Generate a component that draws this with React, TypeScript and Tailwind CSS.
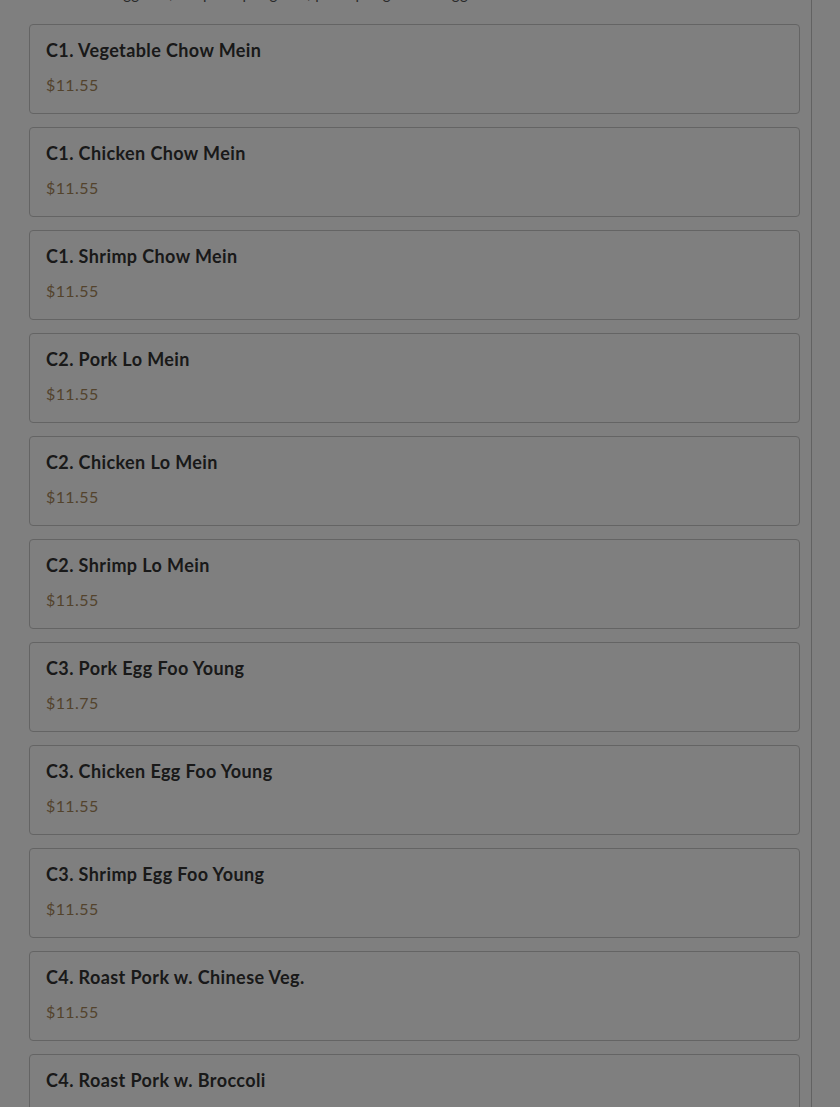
import React from "react";

const items: [string, string][] = [
  ["C1. Vegetable Chow Mein", "$11.55"],
  ["C1. Chicken Chow Mein", "$11.55"],
  ["C1. Shrimp Chow Mein", "$11.55"],
  ["C2. Pork Lo Mein", "$11.55"],
  ["C2. Chicken Lo Mein", "$11.55"],
  ["C2. Shrimp Lo Mein", "$11.55"],
  ["C3. Pork Egg Foo Young", "$11.75"],
  ["C3. Chicken Egg Foo Young", "$11.55"],
  ["C3. Shrimp Egg Foo Young", "$11.55"],
  ["C4. Roast Pork w. Chinese Veg.", "$11.55"],
  ["C4. Roast Pork w. Broccoli", "$11.55"],
];

export default function App() {
  return (
    <div className="relative h-[1107px] overflow-hidden bg-white" style={{ fontFamily: "Lato, 'Open Sans', sans-serif" }}>
      <div className="w-[812px] min-h-[1107px] border-r border-[#c4c4c4] pl-[29px] pr-[11px]">
        <p className="mt-[-17px] h-[41px] text-[15px] leading-[20px] text-[#555] tracking-[0.3px]">
          Served with Egg Roll, Soup or Spring Roll, plus Spring Roll or Egg Roll
        </p>
        <div className="flex flex-col gap-[13px]">
          {items.map(([name, price], i) => (
            <div key={i} className="h-[90px] rounded-[4px] border border-[#c8c8c8] bg-white pl-[16px] pt-[11px]">
              <div className="text-[18px] leading-[28px] font-bold text-[#333] tracking-[0.4px]">{name}</div>
              <div className="mt-[9px] text-[16px] leading-[24px] text-[#a7875a] tracking-[0.4px]">{price}</div>
            </div>
          ))}
        </div>
      </div>
      <div className="absolute inset-0 bg-black/50" />
    </div>
  );
}
